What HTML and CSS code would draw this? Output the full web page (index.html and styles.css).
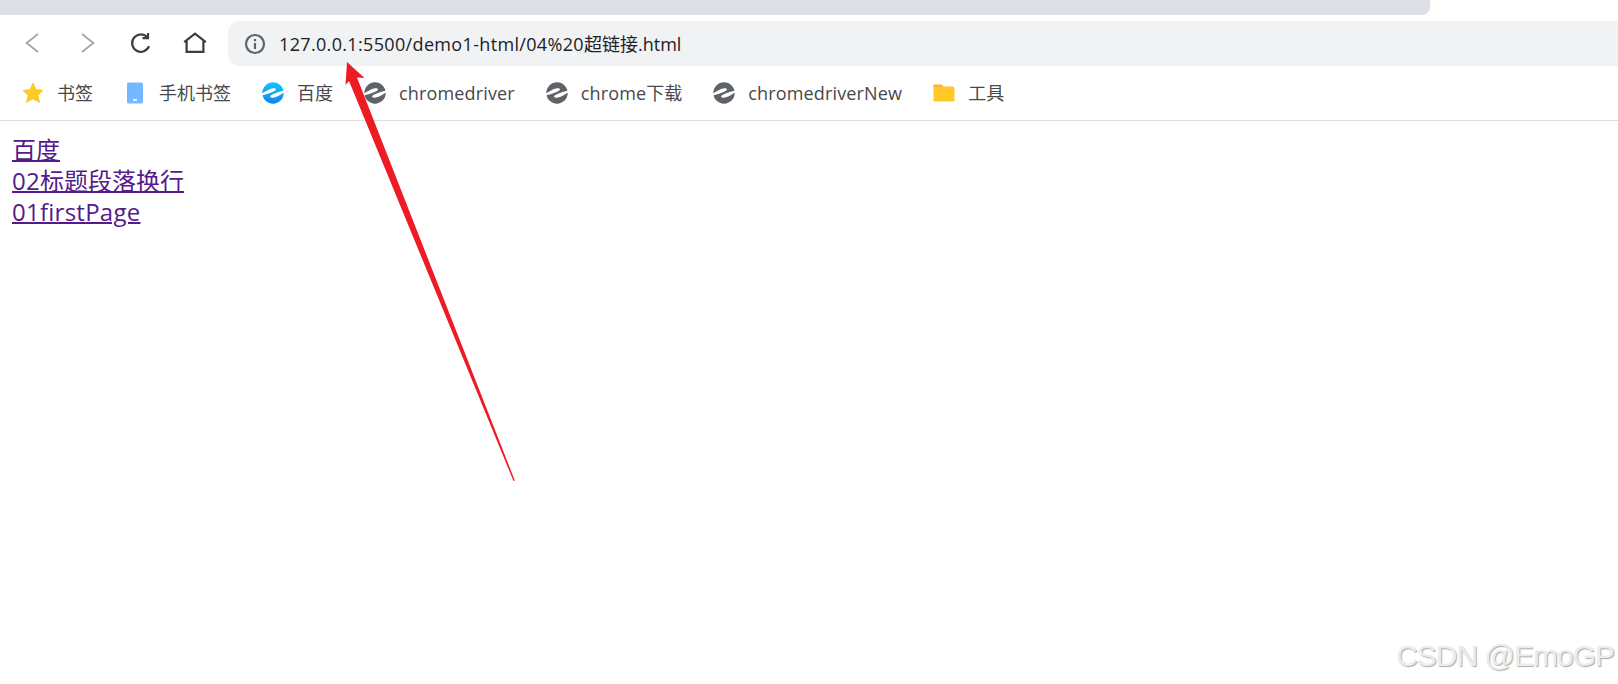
FILE: index.html
```html
<!DOCTYPE html>
<html lang="zh-CN">
<head>
    <meta charset="UTF-8">
    <meta name="viewport" content="width=device-width, initial-scale=1.0">
    <title>04 超链接</title>
    <link rel="stylesheet" href="styles.css">
</head>
<body>
    <svg class="symbols" width="0" height="0">
        <linearGradient id="sky" x1="0" y1="0" x2="0" y2="1">
            <stop offset="0" stop-color="#12c8fb"/>
            <stop offset="1" stop-color="#0b84ee"/>
        </linearGradient>
        <symbol id="globe" viewBox="0 0 22 22">
            <circle cx="11" cy="11" r="10.7"/>
            <path d="M0 13.4C4 12.4 11 10.4 13.8 7.9C14.6 6.4 12.4 5.9 10 6.4C6.5 7.2 3 9.6 0 11.4Z" fill="#fff"/>
            <path d="M22 8.6C18 9.6 11 11.6 8.2 14.1C7.4 15.6 9.6 16.1 12 15.6C15.5 14.8 19 12.4 22 10.6Z" fill="#fff"/>
        </symbol>
    </svg>
    <div class="tabstrip"></div>
    <div class="toolbar">
        <div class="nav">
            <svg class="muted" width="22" height="22" viewBox="0 0 22 22"><path d="M16 2L4.6 11L16 20"/></svg>
            <svg class="muted" width="22" height="22" viewBox="0 0 22 22"><path d="M6 2L17.4 11L6 20"/></svg>
            <svg width="22" height="22" viewBox="0 0 22 22"><path d="M19 14.2A8.7 8.7 0 1 1 17 5M18 1V6.2H12.6"/></svg>
            <svg class="home" width="24" height="22" viewBox="0 0 24 22"><path d="M1.2 10.2L12 1.6L22.8 10.2M3.6 8.5V19.8H20.4V8.5"/></svg>
        </div>
        <div class="address">
            <svg width="22" height="22" viewBox="0 0 22 22">
                <circle cx="11" cy="11" r="9"/>
                <path d="M11 10V16M11 6V8.2"/>
            </svg>
            <span class="url"><span class="host">127.0.0.1:5500/demo1-html/04%20</span>超链接.html</span>
        </div>
    </div>
    <div class="bookmarks">
        <a><svg width="22" height="22" viewBox="0 0 22 22"><path d="M11 1L14 7.6L21 8.4L15.8 13.2L17.5 20.3L11 16.8L4.5 20.3L6.2 13.2L1 8.4L8 7.6Z" fill="#ffc928" stroke="#ffc928" stroke-linejoin="round"/></svg>书签</a>
        <a><svg width="22" height="22" viewBox="0 0 22 22"><rect x="3" y="0.6" width="16" height="21" rx="1.5" fill="#74b9ff"/><path d="M9 18H13" stroke="#fff" stroke-width="1.6"/></svg>手机书签</a>
        <a><svg class="blue" width="22" height="22"><use href="#globe"/></svg>百度</a>
        <a><svg width="22" height="22"><use href="#globe"/></svg><span>chromedriver</span></a>
        <a><svg width="22" height="22"><use href="#globe"/></svg><span>chrome</span>下载</a>
        <a><svg width="22" height="22"><use href="#globe"/></svg><span>chromedriverNew</span></a>
        <a><svg width="22" height="22" viewBox="0 0 22 22"><path d="M0.5 4V3.5Q0.5 2.5 1.5 2.5H8.5L10.5 4.5H20V8H0.5Z" fill="#ffb02e"/><rect x="0.5" y="5" width="21" height="14.5" rx="1" fill="#ffc928"/></svg>工具</a>
    </div>
    <div class="page">
        <a href="#">百度</a><br>
        <a href="#"><span>02</span>标题段落换行</a><br>
        <a href="#"><span>01firstPage</span></a>
    </div>
    <svg class="arrow" width="180" height="430" viewBox="0 0 180 430">
        <path d="M7 2L24.5 18L17 17.5L174.8 420.5L173.5 421L9 21L5.5 25Z"/>
    </svg>
    <div class="watermark">CSDN @EmoGP</div>
</body>
</html>
```
FILE: styles.css
```css
body {
    margin: 0;
    height: 684px;
    overflow: hidden;
    position: relative;
    background: #fff;
    font-family: "Open Sans", "Noto Sans CJK SC", sans-serif;
}
.symbols {
    position: absolute;
}
.tabstrip {
    width: 1430px;
    height: 15px;
    background: #dfe0e5;
    border-bottom-right-radius: 8px;
}
.toolbar {
    display: flex;
    height: 45px;
    margin-top: 6px;
}
.nav {
    display: flex;
    align-items: center;
    gap: 32px;
    width: 206px;
    height: 43px;
    padding-left: 22px;
}
.nav svg {
    flex: none;
    fill: none;
    stroke: #3c3d40;
    stroke-width: 2.2;
}
.nav .muted {
    stroke: #a6a6a8;
    stroke-width: 1.8;
}
.nav .home {
    margin-left: -1px;
}
.address {
    display: flex;
    flex: 1;
    align-items: center;
    background: #f1f2f4;
    border-radius: 12px 0 0 12px;
    padding-left: 16px;
    color: #202124;
    font-size: 18px;
    line-height: 24px;
}
.address svg {
    fill: none;
    stroke: #5f6368;
    stroke-width: 2.2;
}
.url {
    margin-left: 13px;
    white-space: nowrap;
}
.host {
    letter-spacing: 0.34px;
}
.bookmarks {
    display: flex;
    align-items: center;
    height: 54px;
    border-bottom: 1px solid #dcdddf;
    padding-left: 22px;
    gap: 31px;
    color: #47484b;
    font-size: 18px;
    line-height: 24px;
    white-space: nowrap;
}
.bookmarks a {
    display: flex;
    align-items: center;
}
.bookmarks span {
    letter-spacing: 0.15px;
}
.bookmarks svg {
    margin-right: 13px;
    fill: #5f6368;
}
.bookmarks .blue {
    fill: url(#sky);
}
.page {
    padding: 13px 12px;
    font-size: 24px;
    line-height: 31px;
}
.page a {
    color: #551a8b;
    text-decoration-thickness: 2px;
}
.page span {
    letter-spacing: 0.25px;
}
.arrow {
    position: absolute;
    left: 340px;
    top: 60px;
    fill: #ed1c24;
}
.watermark {
    position: absolute;
    right: 4px;
    bottom: 10px;
    font-family: "Liberation Sans", sans-serif;
    font-size: 30px;
    line-height: 36px;
    letter-spacing: -1px;
    color: #ececec;
    text-shadow: 1px 1px 1px #aaa;
}
```
